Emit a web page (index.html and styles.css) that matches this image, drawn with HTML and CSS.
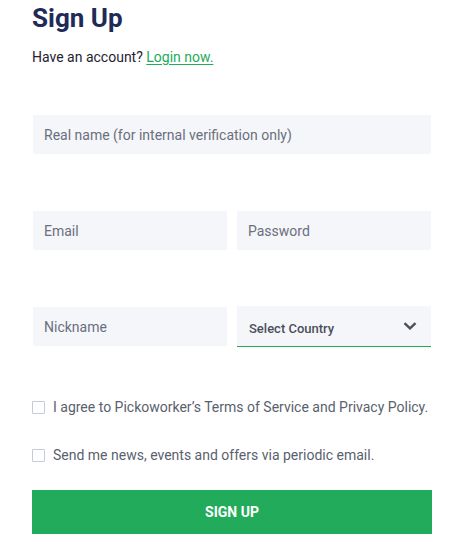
FILE: index.html
```html
<!DOCTYPE html>
<html>
<head>
<meta charset="utf-8">
<link rel="stylesheet" href="styles.css">
</head>
<body>
<div class="signup">
  <h1 class="title">Sign Up</h1>
  <p class="subtitle">Have an account? <a class="login-link" href="#">Login now.</a></p>
  <form class="form">
    <div class="row row-single">
      <div class="field"><span class="placeholder">Real name (for internal verification only)</span></div>
    </div>
    <div class="row row-double">
      <div class="field"><span class="placeholder">Email</span></div>
      <div class="field"><span class="placeholder">Password</span></div>
    </div>
    <div class="row row-double row-third">
      <div class="field"><span class="placeholder">Nickname</span></div>
      <div class="field select">
        <span class="select-label">Select Country</span>
        <svg class="chevron" width="14" height="8" viewBox="0 0 14 8"><path d="M1.5 1.2 L7 6.4 L12.5 1.2" fill="none" stroke="#4b4f5c" stroke-width="2.4"/></svg>
      </div>
    </div>
    <label class="check check-first"><span class="box"></span><span class="check-text">I agree to Pickoworker’s Terms of Service and Privacy Policy.</span></label>
    <label class="check check-second"><span class="box"></span><span class="check-text">Send me news, events and offers via periodic email.</span></label>
    <div class="button">SIGN UP</div>
  </form>
</div>
</body>
</html>
```

FILE: styles.css
```css
html, body {
  margin: 0;
  padding: 0;
  background: #ffffff;
}
body {
  font-family: Roboto, "Liberation Sans", Arial, sans-serif;
}
.signup {
  width: 400px;
  padding: 0 0 0 32px;
}
.title {
  margin: 0;
  padding-top: 3px;
  font-size: 26px;
  line-height: 30px;
  font-weight: 700;
  color: #1e2b58;
}
.subtitle {
  margin: 14px 0 0 0;
  font-size: 14px;
  line-height: 20px;
  color: #1f2330;
}
.login-link {
  color: #22ab5a;
  text-decoration: underline;
  text-underline-offset: 2px;
}
.form {
  display: flex;
  flex-direction: column;
  margin-top: 48px;
}
.row {
  display: grid;
  column-gap: 10px;
  padding: 0 1px;
  align-items: start;
}
.row-single {
  grid-template-columns: 1fr;
  margin-bottom: 57px;
}
.row-double {
  grid-template-columns: 1fr 1fr;
}
.row-third {
  margin-top: 57px;
}
.field {
  min-width: 0;
  height: 39px;
  background: #f5f6fa;
  display: flex;
  align-items: center;
  padding: 0 11px;
  box-sizing: border-box;
}
.placeholder {
  font-size: 14px;
  color: #6a6f7d;
}
.select {
  height: 41px;
  margin-top: -1px;
  border-bottom: 1px solid #22ab5a;
  justify-content: space-between;
  padding: 4px 14px 0 12px;
}
.select-label {
  font-size: 13px;
  font-weight: 500;
  color: #4b4f5c;
}
.chevron {
  display: block;
  margin-top: -5px;
}
.check {
  display: flex;
  align-items: center;
  gap: 8px;
  font-size: 14px;
  line-height: 20px;
  color: #5a5f6e;
}
.check-first {
  margin-top: 50px;
}
.check-second {
  margin-top: 28px;
}
.box {
  width: 11px;
  height: 11px;
  border: 1px solid #c5cada;
  border-radius: 1px;
  background: #fff;
  flex: none;
}
.button {
  margin-top: 25px;
  height: 44px;
  background: #22ab5a;
  color: #ffffff;
  font-size: 14px;
  font-weight: 700;
  display: flex;
  align-items: center;
  justify-content: center;
}
```
